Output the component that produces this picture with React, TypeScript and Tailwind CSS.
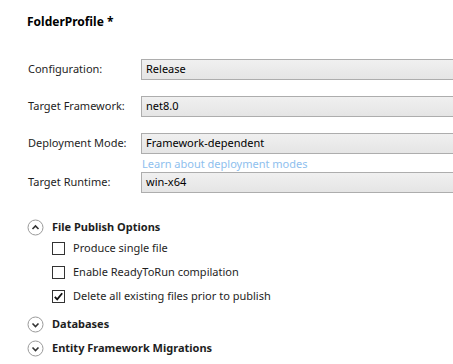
import React from "react";

const font = { fontFamily: '"Segoe UI", "Noto Sans", "Liberation Sans", sans-serif' };

function Field({ label, value }: { label: string; value: string }) {
  return (
    <div className="flex h-[21px] items-center">
      <div className="w-[113px] text-[11px] text-[#1e1e1e]">{label}</div>
      <div className="flex h-[21px] flex-1 items-center border-y border-l border-[#adadad] bg-gradient-to-b from-[#f0f0f0] to-[#e5e5e5] pl-[4px] text-[11px] text-black mr-[-4px]">
        {value}
      </div>
    </div>
  );
}

function Chevron({ up }: { up?: boolean }) {
  return (
    <svg width="17" height="17" viewBox="0 0 17 17" className="shrink-0">
      <circle cx="8.5" cy="8.5" r="7.5" fill="white" stroke="#9a9a9a" strokeWidth="1" />
      <path
        d={up ? "M5.5 10 L8.5 7 L11.5 10" : "M5.5 7.5 L8.5 10.5 L11.5 7.5"}
        fill="none"
        stroke="#333"
        strokeWidth="1.6"
      />
    </svg>
  );
}

function Check({ label, checked }: { label: string; checked?: boolean }) {
  return (
    <div className="flex h-[13px] items-center gap-[8px]">
      <div className="flex h-[13px] w-[13px] items-center justify-center border border-[#333] bg-white">
        {checked && (
          <svg width="11" height="11" viewBox="0 0 11 11">
            <path d="M1.8 5.8 L4.2 8.4 L9.2 2.2" fill="none" stroke="#111" strokeWidth="1.8" />
          </svg>
        )}
      </div>
      <span className="text-[11px] text-[#1e1e1e]">{label}</span>
    </div>
  );
}

function Section({ title, up }: { title: string; up?: boolean }) {
  return (
    <div className="flex items-center gap-[8px]">
      <Chevron up={up} />
      <span className="text-[11px] font-bold text-[#1e1e1e]">{title}</span>
    </div>
  );
}

export default function App() {
  return (
    <div className="h-[364px] w-[453px] overflow-hidden bg-white" style={font}>
      <div className="pl-[27px] pt-[13px] text-[12px] font-bold leading-[17px] text-black">FolderProfile *</div>

      <div className="mt-[29px] flex flex-col gap-[16px] pl-[28px]">
        <Field label="Configuration:" value="Release" />
        <Field label="Target Framework:" value="net8.0" />
        <div className="flex flex-col">
          <Field label="Deployment Mode:" value="Framework-dependent" />
          <div className="h-0 pl-[114px] pt-[2px] text-[11px] leading-[16px] text-[#8ec0ee]">Learn about deployment modes</div>
        </div>
        <Field label="Target Runtime:" value="win-x64" />
      </div>

      <div className="mt-[26px] flex flex-col pl-[27px]">
        <Section title="File Publish Options" up />
        <div className="mt-[6px] flex flex-col gap-[11px] pl-[25px]">
          <Check label="Produce single file" />
          <Check label="Enable ReadyToRun compilation" />
          <Check label="Delete all existing files prior to publish" checked />
        </div>
        <div className="mt-[13px] flex flex-col gap-[7px]">
          <Section title="Databases" />
          <Section title="Entity Framework Migrations" />
        </div>
      </div>
    </div>
  );
}
